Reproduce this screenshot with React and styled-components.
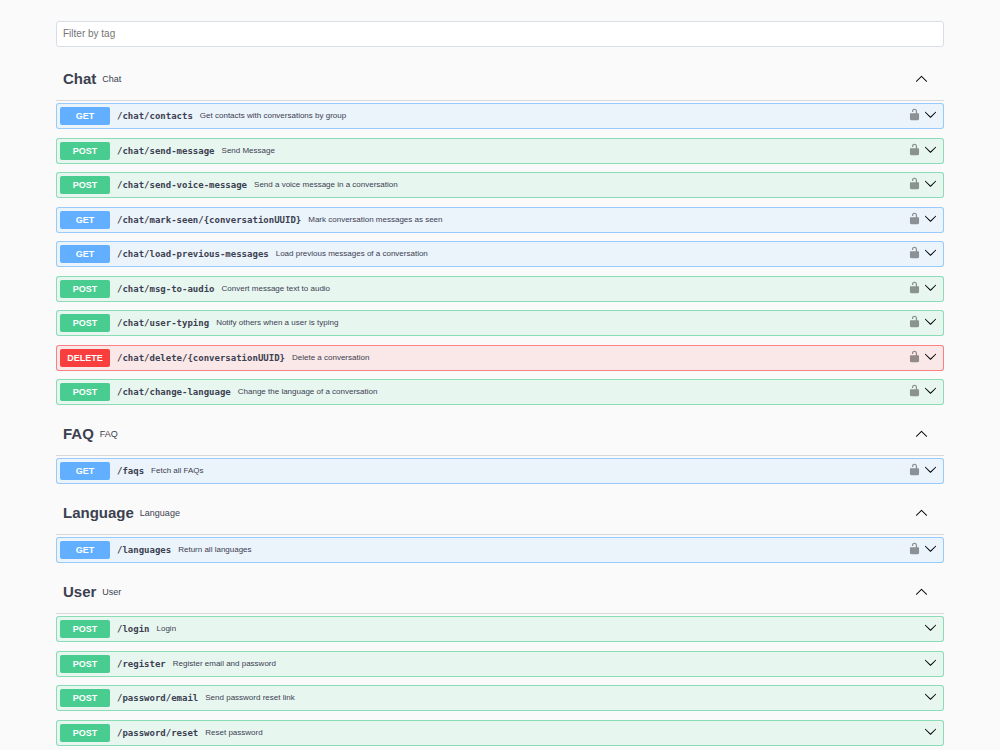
import React, { useState } from "react";
import styled, { createGlobalStyle } from "styled-components";

const METHODS = {
  GET: { solid: "#61affe", tint: "#ebf3fb" },
  POST: { solid: "#49cc90", tint: "#e8f6f0" },
  DELETE: { solid: "#f93e3e", tint: "#fae7e7" },
};

const SECTIONS = [
  {
    name: "Chat",
    secured: true,
    operations: [
      ["GET", "/chat/contacts", "Get contacts with conversations by group"],
      ["POST", "/chat/send-message", "Send Message"],
      ["POST", "/chat/send-voice-message", "Send a voice message in a conversation"],
      ["GET", "/chat/mark-seen/{conversationUUID}", "Mark conversation messages as seen"],
      ["GET", "/chat/load-previous-messages", "Load previous messages of a conversation"],
      ["POST", "/chat/msg-to-audio", "Convert message text to audio"],
      ["POST", "/chat/user-typing", "Notify others when a user is typing"],
      ["DELETE", "/chat/delete/{conversationUUID}", "Delete a conversation"],
      ["POST", "/chat/change-language", "Change the language of a conversation"],
    ],
  },
  { name: "FAQ", secured: true, operations: [["GET", "/faqs", "Fetch all FAQs"]] },
  { name: "Language", secured: true, operations: [["GET", "/languages", "Return all languages"]] },
  {
    name: "User",
    secured: false,
    operations: [
      ["POST", "/login", "Login"],
      ["POST", "/register", "Register email and password"],
      ["POST", "/password/email", "Send password reset link"],
      ["POST", "/password/reset", "Reset password"],
    ],
  },
];

const GlobalStyle = createGlobalStyle`
  *, *::before, *::after { box-sizing: border-box; }
  body {
    margin: 0;
    background: #fafafa;
    color: #3b4151;
    font-family: "Liberation Sans", Arial, sans-serif;
  }
  button { font: inherit; color: inherit; }
`;

const Page = styled.main`
  padding: 21px 56px 0;
`;

const FilterInput = styled.input`
  display: block;
  width: 100%;
  height: 26px;
  margin-bottom: 12px;
  padding: 0 6px 1px;
  border: 1px solid #d8dde7;
  border-radius: 3px;
  background: #fff;
  color: #3b4151;
  font-family: inherit;
  font-size: 10px;

  &::placeholder { color: #757575; opacity: 1; }
`;

const SectionList = styled.div`
  display: flex;
  flex-direction: column;
  gap: 9px;
`;

const SectionHeader = styled.button`
  display: flex;
  align-items: center;
  gap: 6px;
  width: 100%;
  height: 42px;
  margin-bottom: 2px;
  padding: 0 16px 2px 7px;
  border: 0;
  border-bottom: 1px solid #d8d9db;
  background: none;
  text-align: left;
  cursor: pointer;
`;

const SectionTitle = styled.span`
  font-size: 15px;
  font-weight: 700;
  line-height: 18px;
`;

const SectionNote = styled.span`
  flex: 1;
  font-size: 9px;
  line-height: 18px;
`;

const Operation = styled.div`
  display: flex;
  align-items: center;
  height: 26px;
  padding: 0 6px 0 3px;
  border: 1px solid ${(p) => METHODS[p.$method].solid}99;
  border-radius: 3px;
  background: ${(p) => METHODS[p.$method].tint};

  &:nth-child(even) { margin-top: 9px; }
  &:nth-child(odd):not(:first-child) { margin-top: 8px; }
`;

const Summary = styled.button`
  display: flex;
  align-items: center;
  gap: 7px;
  flex: 1;
  min-width: 0;
  height: 24px;
  padding: 0;
  border: 0;
  background: none;
  text-align: left;
  cursor: pointer;
`;

const Method = styled.span`
  flex: none;
  width: 50px;
  border-radius: 2px;
  background: ${(p) => METHODS[p.$method].solid};
  color: #fff;
  font-size: 9px;
  font-weight: 700;
  line-height: 18px;
  text-align: center;
`;

const Path = styled.span`
  font-family: "DejaVu Sans Mono", monospace;
  font-size: 9px;
  font-weight: 700;
  line-height: 18px;
`;

const Description = styled.span`
  font-size: 8px;
  line-height: 18px;
`;

const IconButton = styled.button`
  display: flex;
  padding: 0 0 4px;
  margin-left: 3px;
  border: 0;
  background: none;
  cursor: pointer;
`;

const Icon = styled.svg`
  display: block;
  flex: none;
  width: 13px;
  height: 13px;
  fill: #000;
  opacity: ${(p) => (p.$muted ? 0.4 : 1)};
`;

const ArrowUp = () => (
  <Icon viewBox="0 0 20 20" aria-hidden="true">
    <path d="M17.418 14.908c.272.268.709.268.979 0s.271-.701 0-.969l-7.908-7.83c-.27-.268-.707-.268-.979 0l-7.908 7.83c-.27.268-.27.701 0 .969.271.268.709.268.979 0L10 7.767l7.418 7.141z" />
  </Icon>
);

const ArrowDown = () => (
  <Icon viewBox="0 0 20 20" aria-hidden="true">
    <path d="M17.418 6.109c.272-.268.709-.268.979 0s.271.701 0 .969l-7.908 7.83c-.27.268-.707.268-.979 0l-7.908-7.83c-.27-.268-.27-.701 0-.969.271-.268.709-.268.979 0L10 13.25l7.418-7.141z" />
  </Icon>
);

const Unlocked = () => (
  <Icon $muted viewBox="0 0 20 20" aria-hidden="true">
    <path d="M15.8 8H14V5.6C14 2.703 12.665 1 10 1 7.334 1 6 2.703 6 5.6V6h2v-.801C8 3.754 8.797 3 10 3c1.203 0 2 .754 2 2.199V8H4c-.553 0-1 .646-1 1.199V17c0 .549.428 1.139.951 1.307l1.197.387C5.672 18.861 6.55 19 7.1 19h5.8c.549 0 1.428-.139 1.951-.307l1.196-.387c.524-.167.953-.757.953-1.306V9.199C17 8.646 16.352 8 15.8 8z" />
  </Icon>
);

function Section({ name, secured, operations }) {
  const [open, setOpen] = useState(true);
  return (
    <section>
      <SectionHeader aria-expanded={open} onClick={() => setOpen(!open)}>
        <SectionTitle>{name}</SectionTitle>
        <SectionNote>{name}</SectionNote>
        {open ? <ArrowUp /> : <ArrowDown />}
      </SectionHeader>
      {open && (
        <div>
          {operations.map(([method, path, description]) => (
            <Operation key={path} $method={method}>
              <Summary>
                <Method $method={method}>{method}</Method>
                <Path>{path}</Path>
                <Description>{description}</Description>
              </Summary>
              {secured && (
                <IconButton aria-label="Authorize">
                  <Unlocked />
                </IconButton>
              )}
              <IconButton aria-label={`Expand ${path}`}>
                <ArrowDown />
              </IconButton>
            </Operation>
          ))}
        </div>
      )}
    </section>
  );
}

export default function App() {
  const [filter, setFilter] = useState("");
  const visible = SECTIONS.filter((s) => s.name.toLowerCase().includes(filter.toLowerCase()));
  return (
    <Page>
      <GlobalStyle />
      <FilterInput
        type="text"
        aria-label="Filter by tag"
        placeholder="Filter by tag"
        value={filter}
        onChange={(e) => setFilter(e.target.value)}
      />
      <SectionList>
        {visible.map((section) => (
          <Section key={section.name} {...section} />
        ))}
      </SectionList>
    </Page>
  );
}
